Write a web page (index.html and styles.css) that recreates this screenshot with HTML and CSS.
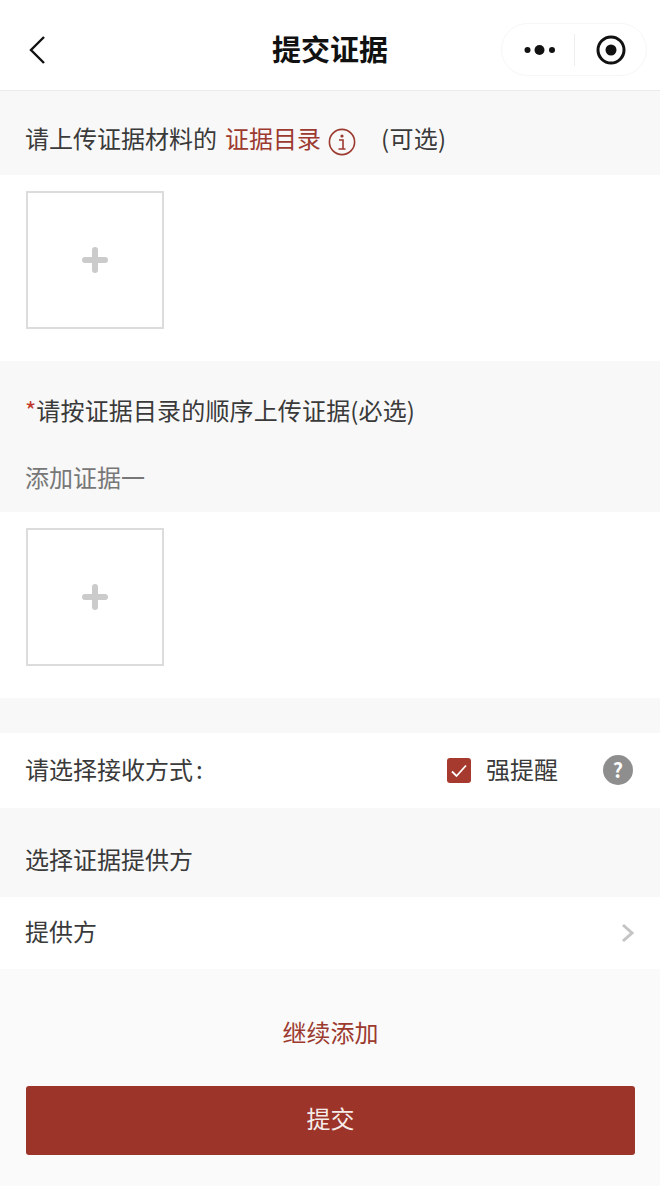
FILE: index.html
```html
<html>
<head>
    <title>提交证据</title>
    <link rel="stylesheet" href="styles.css">
</head>

<body>
<div class="nav">
    <svg class="nav-back" width="18" height="30" viewBox="0 0 18 30">
        <path d="M16 2 L3 15 L16 28" fill="none" stroke="#111" stroke-width="2.4"/>
    </svg>
    <div class="nav-title">提交证据</div>
    <div class="capsule">
        <svg class="capsule-dots" width="32" height="12" viewBox="0 0 32 12">
            <circle cx="3.5" cy="6" r="3" fill="#111"/>
            <circle cx="15.5" cy="6" r="5" fill="#111"/>
            <circle cx="28" cy="6" r="3" fill="#111"/>
        </svg>
        <div class="capsule-line"></div>
        <svg class="capsule-target" width="30" height="30" viewBox="0 0 30 30">
            <circle cx="15" cy="15" r="13" fill="none" stroke="#111" stroke-width="3"/>
            <circle cx="15" cy="15" r="5.5" fill="#111"/>
        </svg>
    </div>
</div>

<div class="gray head-one">
    <span>请上传证据材料的</span>
    <span class="red link">证据目录</span>
    <svg class="info" width="28" height="28" viewBox="0 0 28 28">
        <circle cx="14" cy="14" r="12.6" fill="none" stroke="#9c3a30" stroke-width="1.6"/>
        <circle cx="14" cy="8" r="1.6" fill="#9c3a30"/>
        <path d="M11 12 H15 V21 M10.5 21 H17.5" fill="none" stroke="#9c3a30" stroke-width="1.6"/>
    </svg>
    <span class="optional">(可选)</span>
</div>
<div class="white upload-row">
    <div class="upload"><div class="plus"></div></div>
</div>

<div class="gray head-two">
    <div class="must"><span class="star">*</span>请按证据目录的顺序上传证据(必选)</div>
    <div class="add-title">添加证据一</div>
</div>
<div class="white upload-row">
    <div class="upload"><div class="plus"></div></div>
</div>

<div class="gray gap"></div>

<div class="white row receive">
    <span class="grow">请选择接收方式<span class="colon">:</span></span>
    <div class="check">
        <svg width="18" height="16" viewBox="0 0 18 16">
            <path d="M2 8.5 L6.5 13 L16 2.5" fill="none" stroke="#fff" stroke-width="1.8"/>
        </svg>
    </div>
    <span class="remind">强提醒</span>
    <div class="help">?</div>
</div>

<div class="gray head-three">选择证据提供方</div>

<div class="white row provider">
    <span class="grow">提供方</span>
    <svg width="14" height="20" viewBox="0 0 14 20">
        <path d="M2 2 L11 10 L2 18" fill="none" stroke="#c4c4c4" stroke-width="3"/>
    </svg>
</div>

<div class="footer">
    <div class="red more">继续添加</div>
    <div class="submit">提交</div>
</div>
</body>
</html>
```

FILE: styles.css
```css
body {
    margin: 0;
    height: 1186px;
    overflow: hidden;
    background-color: #f8f8f8;
    color: #3a3a3a;
    font-family: "Noto Sans CJK SC", "Liberation Sans", sans-serif;
    font-size: 24px;
    line-height: 34px;
}

.gray {
    background-color: #f8f8f8;
}

.white {
    background-color: #fff;
}

.red {
    color: #9c3a30;
}

/* top bar */
.nav {
    display: flex;
    align-items: center;
    justify-content: center;
    position: relative;
    height: 90px;
    background-color: #fff;
    border-bottom: 1px solid #ebebeb;
}

.nav-back {
    position: absolute;
    left: 28px;
    top: 35px;
}

.nav-title {
    margin-top: 6px;
    font-size: 29px;
    font-weight: bold;
    color: #111;
}

.capsule {
    display: flex;
    align-items: center;
    position: absolute;
    left: 501px;
    top: 23px;
    width: 146px;
    height: 53px;
    box-sizing: border-box;
    border: 1px solid #f6f6f6;
    border-radius: 27px;
}

.capsule-dots {
    margin-left: 22px;
}

.capsule-line {
    width: 1px;
    height: 32px;
    margin-left: 18px;
    background-color: #eeeeee;
}

.capsule-target {
    margin-left: 21px;
}

/* section headers */
.head-one {
    display: flex;
    align-items: center;
    height: 84px;
    padding: 10px 25px 0;
    box-sizing: border-box;
}

.link {
    margin-left: 8px;
}

.info {
    margin-left: 7px;
    margin-top: 7px;
}

.optional {
    margin-left: 25px;
    letter-spacing: 0.3px;
}

.head-two {
    height: 151px;
    padding: 32px 25px 0;
    box-sizing: border-box;
}

.must {
    letter-spacing: 0.15px;
}

.star {
    color: #c0392b;
}

.add-title {
    margin-top: 33px;
    color: #777;
}

.gap {
    height: 35px;
}

.head-three {
    height: 89px;
    padding: 34px 25px 0;
    box-sizing: border-box;
}

/* upload boxes */
.upload-row {
    height: 186px;
    padding: 16px 26px 0;
    box-sizing: border-box;
}

.upload {
    display: flex;
    align-items: center;
    justify-content: center;
    width: 138px;
    height: 138px;
    box-sizing: border-box;
    border: 2px solid #dcdcdc;
}

.plus {
    position: relative;
    width: 26px;
    height: 6px;
    border-radius: 3px;
    background-color: #cbcbcb;
}

.plus::after {
    content: "";
    position: absolute;
    left: 10px;
    top: -10px;
    width: 6px;
    height: 26px;
    border-radius: 3px;
    background-color: #cbcbcb;
}

/* white rows */
.row {
    display: flex;
    align-items: center;
    padding: 0 25px;
}

.grow {
    flex: 1;
    margin-bottom: 4px;
}

.colon {
    margin-left: 3px;
}

.receive {
    height: 75px;
    padding-right: 27px;
}

.provider {
    height: 72px;
    padding-right: 25px;
}

.check {
    display: flex;
    align-items: center;
    justify-content: center;
    width: 24px;
    height: 25px;
    border-radius: 3px;
    background-color: #a63a2e;
}

.remind {
    margin-left: 15px;
    margin-bottom: 4px;
}

.help {
    width: 30px;
    height: 30px;
    margin-left: 45px;
    margin-bottom: 2px;
    border-radius: 50%;
    background-color: #8e8e8e;
    color: #fff;
    font-size: 20px;
    font-weight: bold;
    line-height: 30px;
    text-align: center;
}

/* bottom actions */
.footer {
    height: 217px;
    padding: 46px 25px 0 26px;
    box-sizing: border-box;
    background-color: #fafafa;
}

.more {
    text-align: center;
}

.submit {
    height: 69px;
    margin-top: 37px;
    border-radius: 3px;
    background-color: #9c342a;
    color: #f5ece9;
    line-height: 64px;
    text-align: center;
}
```
